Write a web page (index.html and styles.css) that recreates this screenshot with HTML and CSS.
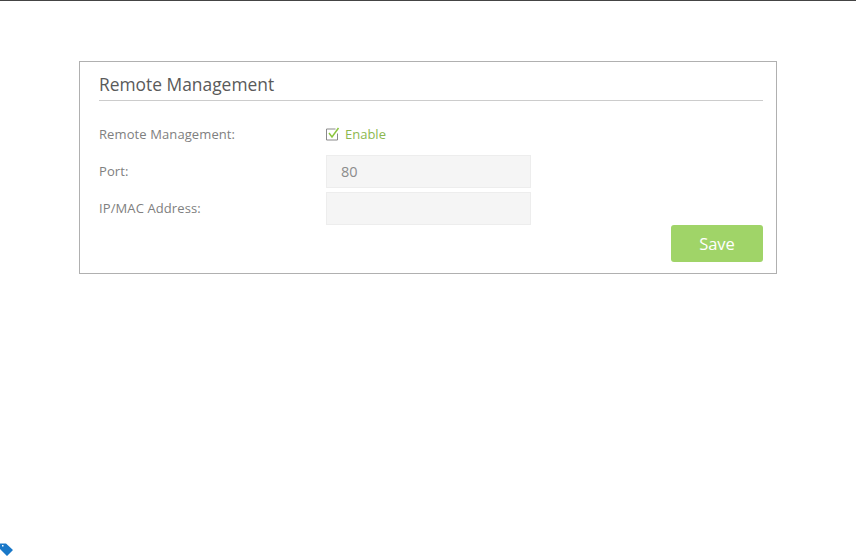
FILE: index.html
```html
<!DOCTYPE html>
<html lang="en">
<head>
<meta charset="utf-8">
<title>Remote Management</title>
<link rel="stylesheet" href="styles.css">
</head>
<body>
<main class="page">
  <section class="panel">
    <h2 class="title">Remote Management</h2>
    <div class="rows">
      <div class="row row-check">
        <span class="label">Remote Management:</span>
        <label class="check">
          <svg class="box" width="14" height="14" viewBox="0 0 14 14"><path d="M11.500 6.500v6.500h-11v-11h9" fill="none" stroke="#8a8a8a"/><path d="M3 6l3 4 6.500-9" fill="none" stroke="#8cc63f" stroke-width="1.500"/></svg>
          <span>Enable</span>
        </label>
      </div>
      <div class="row row-field">
        <span class="label">Port:</span>
        <div class="field">80</div>
      </div>
      <div class="row row-field">
        <span class="label">IP/MAC Address:</span>
        <div class="field"></div>
      </div>
    </div>
    <div class="actions"><button class="save" type="button">Save</button></div>
  </section>
</main>
<svg class="tag" width="14" height="13" viewBox="0 0 14 13">
  <path fill-rule="evenodd" d="M0 .5h6l7 6.500-6 6-7-7zM2 2v1.500h1.500v-1.500z" fill="#1a78c8"/>
</svg>
</body>
</html>
```
FILE: styles.css
```css
* { box-sizing: border-box; }
html, body { margin: 0; height: 100%; }
body {
  position: relative;
  height: 556px;
  overflow: hidden;
  background: #fff;
  border-top: 1px solid #444;
  font-family: "Open Sans", sans-serif;
  color: #777;
}
.page { padding: 60px 79px 0; }
.panel {
  width: 698px;
  height: 213px;
  border: 1px solid #b0b0b0;
  padding: 10px 13px 0 19px;
}
.title {
  margin: 0;
  height: 29px;
  border-bottom: 1px solid #ccc;
  font-size: 17.400px;
  line-height: 24px;
  font-weight: 400;
  color: #5a5a5a;
}
.rows { display: flex; flex-direction: column; gap: 4px; padding-top: 17px; }
.row { display: flex; align-items: center; height: 33px; }
.row-check { height: 32px; margin-bottom: 1px; }
.row-field .label { padding-bottom: 2px; }
.label { width: 227px; font-size: 13px; letter-spacing: .1px; color: #808080; }
.check { display: flex; align-items: center; gap: 5px; font-size: 13px; color: #8cb84f; }
.box { display: block; }
.field {
  width: 205px;
  height: 33px;
  background: #f5f5f5;
  border: 1px solid #ededed;
  padding-left: 14px;
  font-size: 14.500px;
  line-height: 31px;
  color: #8c8c8c;
}
.actions { display: flex; justify-content: flex-end; }
.save {
  width: 92px;
  height: 37px;
  border: 0;
  border-radius: 3px;
  background: #a0d468;
  color: #fff;
  font: 400 16.500px "Open Sans", sans-serif;
}
.tag { position: absolute; left: 0; bottom: 0; }
```
